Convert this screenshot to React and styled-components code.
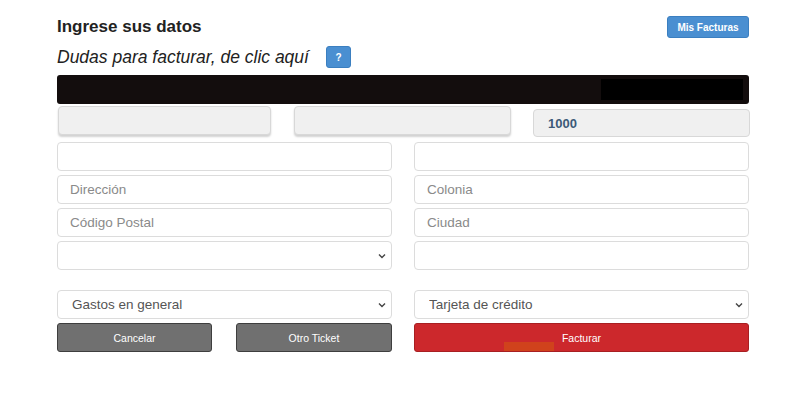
import styled, { createGlobalStyle } from "styled-components";

const GlobalStyle = createGlobalStyle`
  html, body {
    margin: 0;
    padding: 0;
    background: #fff;
  }
  body {
    font-family: "Liberation Sans", Arial, sans-serif;
  }
`;

const Page = styled.div`
  width: 800px;
  height: 400px;
  box-sizing: border-box;
  padding: 16px 51px 0 57px;
  background: #fff;
`;

const Header = styled.div`
  display: flex;
  justify-content: space-between;
  align-items: flex-start;
`;

const Title = styled.h2`
  margin: 1px 0 0 0;
  font-size: 17px;
  font-weight: bold;
  color: #222;
`;

const SmallButton = styled.button`
  border: 1px solid #3b7fc0;
  background: #4a8fd1;
  color: #fff;
  font-family: inherit;
  font-weight: bold;
  font-size: 10px;
  border-radius: 3px;
  padding: 0;
  height: ${(p) => p.$h || 22}px;
  width: ${(p) => p.$w}px;
  cursor: pointer;
`;

const HelpLine = styled.div`
  display: flex;
  align-items: center;
  gap: 17px;
  margin-top: 8px;
`;

const HelpText = styled.span`
  font-style: italic;
  font-size: 17.5px;
  color: #222;
`;

const Banner = styled.div`
  margin-top: 7px;
  height: 29px;
  background: #130d0d;
  border-radius: 3px;
  display: flex;
  justify-content: flex-end;
  align-items: center;
  padding-right: 6px;
`;

const BannerBlock = styled.div`
  width: 142px;
  height: 21px;
  background: #000;
`;

const LockedRow = styled.div`
  display: grid;
  grid-template-columns: 214px 218px 217px;
  column-gap: 22px;
  align-items: end;
  margin-top: 2px;
`;

const LockedField = styled.div`
  height: ${(p) => (p.$raised ? 29 : 28)}px;
  box-sizing: border-box;
  background: #f0f0f0;
  border: 1px solid #d8d8d8;
  border-radius: 4px;
  box-shadow: ${(p) => (p.$raised ? "0 2px 2px rgba(0,0,0,0.18)" : "none")};
  margin-bottom: ${(p) => (p.$raised ? 2 : 0)}px;
  margin-left: ${(p) => (p.$raised ? 1 : 0)}px;
  display: flex;
  align-items: center;
  padding-left: 14px;
  font-size: 13px;
  font-weight: bold;
  color: #3c5a78;
`;

const Columns = styled.div`
  display: grid;
  grid-template-columns: 335px 335px;
  column-gap: 22px;
  row-gap: 4px;
  margin-top: 5px;
`;

const Input = styled.input`
  height: 29px;
  box-sizing: border-box;
  width: 100%;
  border: 1px solid #dcdcdc;
  border-radius: 4px;
  background: #fff;
  padding: 0 12px;
  font-family: inherit;
  font-size: 13.5px;
  color: #555;
  outline: none;

  &::placeholder {
    color: #8a8a8a;
  }
`;

const Select = styled.select`
  height: 29px;
  box-sizing: border-box;
  width: 100%;
  border: 1px solid #dcdcdc;
  border-radius: 4px;
  background: #fff;
  padding: 0 14px;
  font-family: inherit;
  font-size: 13.5px;
  color: #555;
  appearance: none;
  background-image: url("data:image/svg+xml;utf8,<svg xmlns='http://www.w3.org/2000/svg' width='8' height='6'><path d='M1 1.5l3 3 3-3' stroke='%23444' stroke-width='1.4' fill='none'/></svg>");
  background-repeat: no-repeat;
  background-position: right 5px center;
  outline: none;
`;

const BottomRow = styled(Columns)`
  margin-top: 20px;
`;

const ButtonPair = styled.div`
  display: grid;
  grid-template-columns: 155px 156px;
  justify-content: space-between;
`;

const ActionButton = styled.button`
  height: 29px;
  width: 100%;
  border: 1px solid ${(p) => (p.$danger ? "#a81f22" : "#3e3e3e")};
  background: ${(p) => (p.$danger ? "#cc282c" : "#707070")};
  color: #fff;
  font-family: inherit;
  font-size: 10.5px;
  border-radius: 3px;
  cursor: pointer;
  position: relative;
`;

const Tab = styled.span`
  position: absolute;
  left: 89px;
  bottom: 0;
  width: 50px;
  height: 9px;
  background: #d0421c;
`;

export default function App() {
  return (
    <>
      <GlobalStyle />
      <Page>
        <Header>
          <Title>Ingrese sus datos</Title>
          <SmallButton $w={82}>Mis Facturas</SmallButton>
        </Header>

        <HelpLine>
          <HelpText>Dudas para facturar, de clic aquí</HelpText>
          <SmallButton $w={25} $h={22}>?</SmallButton>
        </HelpLine>

        <Banner>
          <BannerBlock />
        </Banner>

        <LockedRow>
          <LockedField $raised />
          <LockedField $raised />
          <LockedField>1000</LockedField>
        </LockedRow>

        <Columns>
          <Input />
          <Input />
          <Input placeholder="Dirección" />
          <Input placeholder="Colonia" />
          <Input placeholder="Código Postal" />
          <Input placeholder="Ciudad" />
          <Select defaultValue="">
            <option value=""></option>
          </Select>
          <Input />
        </Columns>

        <BottomRow>
          <Select defaultValue="gastos">
            <option value="gastos">Gastos en general</option>
          </Select>
          <Select defaultValue="tarjeta">
            <option value="tarjeta">Tarjeta de crédito</option>
          </Select>
          <ButtonPair>
            <ActionButton>Cancelar</ActionButton>
            <ActionButton>Otro Ticket</ActionButton>
          </ButtonPair>
          <ActionButton $danger>
            Facturar
            <Tab />
          </ActionButton>
        </BottomRow>
      </Page>
    </>
  );
}
